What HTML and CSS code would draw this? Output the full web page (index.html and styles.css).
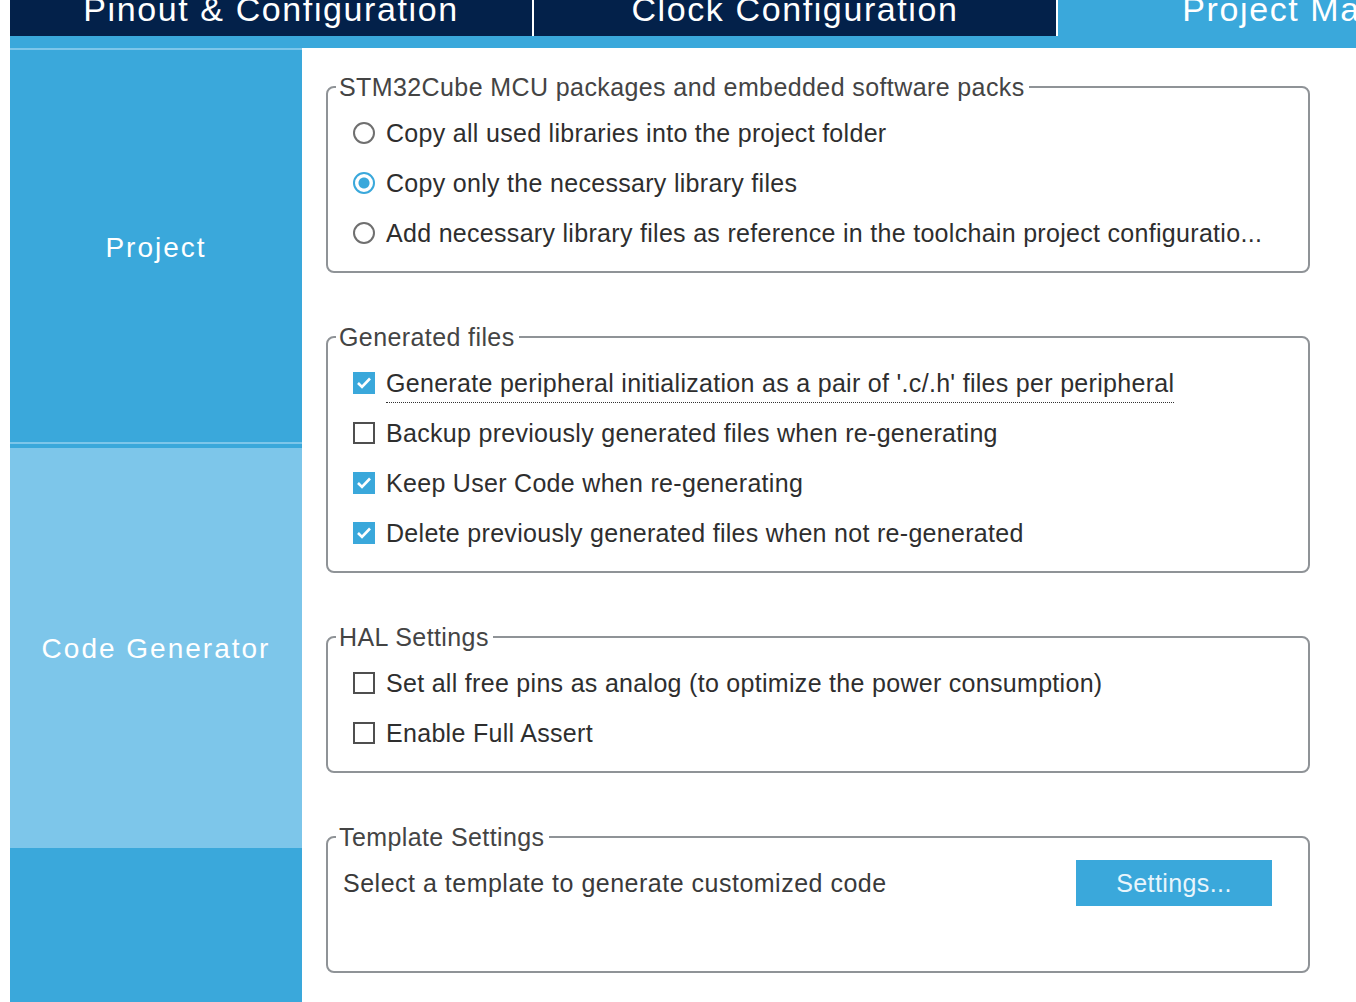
FILE: index.html
```html
<!DOCTYPE html>
<html lang="en">
<head>
    <meta charset="UTF-8">
    <meta name="viewport" content="width=device-width, initial-scale=1.0">
    <title>STM32CubeMX - Project Manager</title>
    <link rel="stylesheet" href="styles.css">
</head>
<body>
    <div class="app">
        <!-- Top tabs -->
        <nav class="tabs">
            <div class="tab"><span>Pinout &amp; Configuration</span></div>
            <div class="tab"><span>Clock Configuration</span></div>
            <div class="tab active"><span>Project Manager</span></div>
        </nav>
        <div class="tabs-line"></div>

        <div class="main">
            <!-- Side menu -->
            <aside class="sidebar">
                <div class="side-item first">Project</div>
                <div class="side-item selected">Code Generator</div>
            </aside>

            <section class="content">
                <fieldset class="group">
                    <legend>STM32Cube MCU packages and embedded software packs</legend>
                    <label class="option"><span class="radio"></span><span>Copy all used libraries into the project folder</span></label>
                    <label class="option"><span class="radio on"></span><span>Copy only the necessary library files</span></label>
                    <label class="option"><span class="radio"></span><span>Add necessary library files as reference in the toolchain project configuratio...</span></label>
                </fieldset>

                <fieldset class="group">
                    <legend>Generated files</legend>
                    <label class="option">
                        <span class="box on"><svg width="22" height="22" viewBox="0 0 22 22"><path d="M5 11 L9 15 L17 6.5" fill="none" stroke="#fff" stroke-width="2.6"/></svg></span>
                        <span><span class="focus">Generate peripheral initialization as a pair of '.c/.h' files per peripheral</span></span>
                    </label>
                    <label class="option"><span class="box"></span><span>Backup previously generated files when re-generating</span></label>
                    <label class="option">
                        <span class="box on"><svg width="22" height="22" viewBox="0 0 22 22"><path d="M5 11 L9 15 L17 6.5" fill="none" stroke="#fff" stroke-width="2.6"/></svg></span>
                        <span>Keep User Code when re-generating</span>
                    </label>
                    <label class="option">
                        <span class="box on"><svg width="22" height="22" viewBox="0 0 22 22"><path d="M5 11 L9 15 L17 6.5" fill="none" stroke="#fff" stroke-width="2.6"/></svg></span>
                        <span>Delete previously generated files when not re-generated</span>
                    </label>
                </fieldset>

                <fieldset class="group">
                    <legend>HAL Settings</legend>
                    <label class="option"><span class="box"></span><span>Set all free pins as analog (to optimize the power consumption)</span></label>
                    <label class="option"><span class="box"></span><span>Enable Full Assert</span></label>
                </fieldset>

                <fieldset class="group template">
                    <legend>Template Settings</legend>
                    <div class="template-row">
                        <span>Select a template to generate customized code</span>
                        <button class="btn">Settings...</button>
                    </div>
                </fieldset>
            </section>
        </div>
    </div>
</body>
</html>
```
FILE: styles.css
```css
body {
    margin: 0;
    font-family: "Liberation Sans", Arial, sans-serif;
    background-color: #fff;
}

.app {
    display: flex;
    flex-direction: column;
    height: 100vh;
    padding-left: 10px;
    overflow: hidden;
}

/* Tabs */
.tabs {
    display: flex;
    height: 36px;
    flex-shrink: 0;
    overflow: hidden;
}

.tab {
    flex: 0 0 522px;
    background-color: #03214a;
    color: #fff;
    font-size: 34px;
    line-height: 34px;
    letter-spacing: 1.6px;
    text-align: center;
    border-right: 2px solid #fff;
}

.tab span {
    display: block;
    margin-top: -8px;
    white-space: nowrap;
}

.tab.active {
    background-color: #3aa8db;
    border-right: none;
}

.tabs-line {
    height: 12px;
    flex-shrink: 0;
    background-color: #3aa8db;
}

.main {
    flex: 1;
    display: flex;
    min-height: 0;
}

/* Side menu */
.sidebar {
    width: 292px;
    flex-shrink: 0;
    background-color: #3aa8db;
}

.side-item {
    display: flex;
    align-items: center;
    justify-content: center;
    box-sizing: border-box;
    color: #fff;
    font-size: 28px;
    letter-spacing: 2px;
}

.side-item.first {
    height: 396px;
    padding-top: 4px;
    border-top: 2px solid #7dc6ea;
    border-bottom: 2px solid #7dc6ea;
    margin-bottom: 4px;
}

.side-item.selected {
    height: 400px;
    padding-top: 2px;
    background-color: #7dc6ea;
}

/* Settings */
.content {
    flex: 1;
    padding: 25px 46px 0 24px;
}

.group {
    margin: 0 0 50px;
    padding: 7px 0 13px 25px;
    border: 2px solid #8f9397;
    border-radius: 8px;
    min-width: 0;
}

.group legend {
    margin-left: -17px;
    padding: 0 4px 0 3px;
    font-size: 25px;
    line-height: 28px;
    letter-spacing: 0.4px;
    color: #444;
}

.option {
    display: flex;
    align-items: center;
    gap: 11px;
    height: 50px;
    font-size: 25px;
    line-height: 28px;
    letter-spacing: 0.3px;
    color: #2e2e2e;
    white-space: nowrap;
}

.radio {
    width: 22px;
    height: 22px;
    box-sizing: border-box;
    flex-shrink: 0;
    border: 2px solid #6f6f6f;
    border-radius: 50%;
    background-color: #fff;
}

.radio.on {
    border-color: #3aa8db;
    background: radial-gradient(circle, #3aa8db 0 5px, #fff 6px);
}

.box {
    width: 22px;
    height: 22px;
    box-sizing: border-box;
    flex-shrink: 0;
    border: 2px solid #4f4f4f;
    background-color: #fff;
}

.box.on {
    border: none;
    background-color: #3aa8db;
}

.box svg {
    display: block;
}

.focus {
    border-bottom: 1px dotted #333;
    padding-bottom: 5px;
}

.group.template {
    padding-bottom: 63px;
}

.template-row {
    display: flex;
    align-items: center;
    justify-content: space-between;
    height: 50px;
    margin-left: -10px;
    padding-right: 36px;
    font-size: 25px;
    line-height: 28px;
    letter-spacing: 0.5px;
    color: #3a3a3a;
}

.btn {
    width: 196px;
    height: 46px;
    padding: 0;
    border: none;
    background-color: #3aa8db;
    color: #e8f5fc;
    font-family: inherit;
    font-size: 25px;
    letter-spacing: 0.4px;
    cursor: pointer;
}
```
